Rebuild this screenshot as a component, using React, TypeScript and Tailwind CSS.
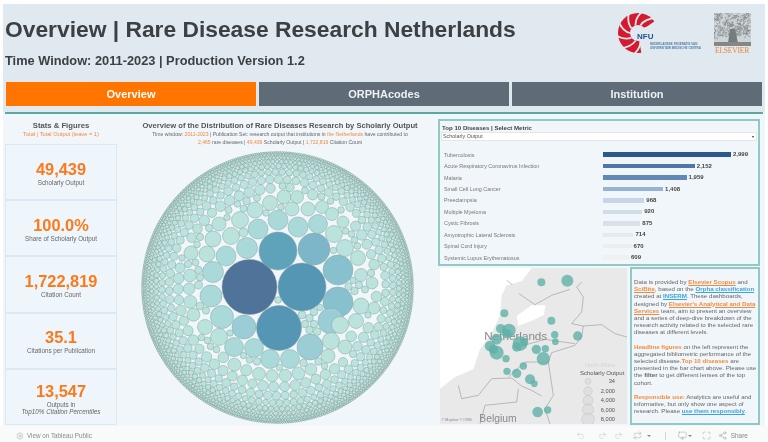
import { useMemo } from 'react';
import { Undo2, Redo2, Repeat, Monitor, Maximize, Share2, Settings } from 'lucide-react';

const stats = [
  { value: '49,439', label: 'Scholarly Output' },
  { value: '100.0%', label: 'Share of Scholarly Output' },
  { value: '1,722,819', label: 'Citation Count' },
  { value: '35.1', label: 'Citations per Publication' },
  { value: '13,547', label: 'Outputs in', sub: 'Top10% Citation Percentiles' },
];

const diseases = [
  { name: 'Tuberculosis', count: 2999, color: '#2a5a8c' },
  { name: 'Acute Respiratory Coronavirus Infection', count: 2152, color: '#4b78a8' },
  { name: 'Malaria', count: 1959, color: '#6089b5' },
  { name: 'Small Cell Lung Cancer', count: 1408, color: '#97b3d3' },
  { name: 'Preeclampsia', count: 968, color: '#c8d5e6' },
  { name: 'Multiple Myeloma', count: 920, color: '#d2dce9' },
  { name: 'Cystic Fibrosis', count: 875, color: '#d9e0ea' },
  { name: 'Amyotrophic Lateral Sclerosis', count: 714, color: '#e6eaef' },
  { name: 'Spinal Cord Injury', count: 670, color: '#ebeef1' },
  { name: 'Systemic Lupus Erythematosus', count: 609, color: '#f1f0f0' },
];

type Circle = { x: number; y: number; r: number };

// page coordinates read off the reference, largest bubbles first
const big: Circle[] = [
  { x: 249.5, y: 287, r: 27.5 }, { x: 302, y: 287, r: 24 }, { x: 279, y: 328, r: 22.5 }, { x: 278, y: 251, r: 19 },
  { x: 314, y: 249, r: 16 }, { x: 338, y: 270, r: 15 }, { x: 338, y: 302, r: 15 }, { x: 244, y: 327, r: 12 },
  { x: 310, y: 347, r: 13 }, { x: 247, y: 248, r: 10.5 }, { x: 226, y: 256, r: 10 }, { x: 258, y: 229, r: 10 },
  { x: 278, y: 220, r: 10 }, { x: 298, y: 227, r: 10 }, { x: 318, y: 224, r: 9.5 }, { x: 334, y: 234, r: 8.5 },
  { x: 345, y: 248, r: 8.5 }, { x: 358, y: 258, r: 7.5 }, { x: 240, y: 220, r: 8.5 }, { x: 255, y: 210, r: 8 },
  { x: 270, y: 203, r: 7.5 }, { x: 284, y: 197, r: 7 }, { x: 297, y: 197, r: 6.5 }, { x: 308, y: 209, r: 7 },
  { x: 292, y: 209, r: 7 }, { x: 322, y: 207, r: 6.5 }, { x: 332, y: 214, r: 6.5 }, { x: 343, y: 222, r: 6 },
  { x: 231, y: 236, r: 8.5 }, { x: 213, y: 239, r: 8 }, { x: 219, y: 224, r: 7 }, { x: 207, y: 254, r: 8 },
  { x: 191, y: 253, r: 7 }, { x: 213, y: 272, r: 10.5 }, { x: 211, y: 296, r: 11 }, { x: 222, y: 317, r: 11.5 },
  { x: 205, y: 327, r: 7.5 }, { x: 219, y: 337, r: 8.5 }, { x: 234, y: 347, r: 9.5 }, { x: 254, y: 348, r: 9.5 },
  { x: 270, y: 359, r: 9.5 }, { x: 290, y: 359, r: 9.5 }, { x: 331, y: 321, r: 13 }, { x: 331, y: 341, r: 8.5 },
  { x: 340, y: 325, r: 8.5 }, { x: 328, y: 356, r: 7 }, { x: 345, y: 347, r: 7 }, { x: 356, y: 321, r: 7.5 },
  { x: 361, y: 306, r: 8 }, { x: 374, y: 308, r: 6 }, { x: 372, y: 283, r: 6 }, { x: 361, y: 275, r: 6.5 },
];

function useCircles() {
  return useMemo(() => {
    const cx = 277.5;
    const cy = 287.5;
    const R = 136;
    const list: Circle[] = [...big];
    const sizeAt = (d: number) => Math.min(8, 0.9 + 8.5 * Math.pow(Math.max(0, (R - d) / 74), 0.9));
    const fitAt = (x: number, y: number, start: number, floor: number) => {
      let fit = start;
      for (const c of list) {
        const g = Math.hypot(c.x - x, c.y - y) - c.r;
        if (g < fit) fit = g;
        if (fit < floor) break;
      }
      return fit;
    };
    // tangent rings from the rim inwards, so the rim stays tidy
    let r = sizeAt(R - 1);
    let d = R - r;
    let ring = 0;
    while (d > 40) {
      const n = Math.floor(Math.PI / Math.asin(r / d));
      const floor = r > 3 ? r * 0.8 : r * 0.6;
      for (let i = 0; i < n; i++) {
        const a = ring * 1.7 + (i / n) * Math.PI * 2;
        const x = cx + Math.cos(a) * d;
        const y = cy + Math.sin(a) * d;
        const fit = fitAt(x, y, r, floor);
        if (fit >= floor) list.push({ x, y, r: fit });
      }
      const next = sizeAt(d - r * 1.8);
      d -= (r + next) * 0.93;
      r = next;
      ring += 1;
    }
    // plug the larger holes left between the rings
    for (let y = cy - 118; y < cy + 118; y += 1.5) {
      for (let x = cx - 118; x < cx + 118; x += 1.5) {
        if (Math.hypot(x - cx, y - cy) > 118) continue;
        const fit = fitAt(x, y, 5, 3.2);
        if (fit >= 3.2) list.push({ x, y, r: fit });
      }
    }
    return list;
  }, []);
}

function bubbleColor(r: number) {
  if (r >= 26) return '#4f7399';
  if (r >= 21) return '#5596b5';
  if (r >= 18) return '#5fa3bb';
  if (r >= 15.5) return '#7cb6c8';
  if (r >= 14) return '#88c1ce';
  if (r >= 11.8) return '#9acdd5';
  if (r >= 9) return '#a9d9d8';
  return '#b9e3dc';
}

function BubbleChart() {
  const circles = useCircles();
  return (
    <svg width="310" height="280" viewBox="125 146 310 280" className="block">
      {circles.map((c, i) => (
        <circle
          key={i}
          cx={c.x}
          cy={c.y}
          r={c.r}
          fill={bubbleColor(c.r)}
          stroke={c.r > 3 ? '#8ba3a2' : '#6f8b89'}
          strokeWidth={c.r > 3 ? 0.5 : 0.45}
        />
      ))}
    </svg>
  );
}

const mapBubbles = [
  [319, 61, 12], [397, 56, 18], [208, 154, 12], [349, 176, 12], [359, 218, 11], [361, 239, 10], [428, 222, 14],
  [197, 200, 14], [222, 205, 20], [215, 215, 14], [185, 232, 16], [165, 252, 16], [185, 272, 21], [175, 262, 14],
  [213, 290, 11], [255, 245, 22], [245, 255, 14], [268, 240, 12], [304, 262, 14], [331, 260, 11], [325, 290, 20],
  [265, 312, 11], [216, 328, 11], [245, 334, 14], [285, 352, 15], [298, 365, 10], [308, 450, 16], [338, 444, 11],
];

const legend = [
  { y: 358, r: 9, label: '34' },
  { y: 387, r: 13, label: '2,000' },
  { y: 415, r: 15, label: '4,000' },
  { y: 443, r: 17, label: '6,000' },
  { y: 472, r: 19, label: '8,000' },
];

function MapView() {
  return (
    <svg width="187" height="156" viewBox="15 18 561 468" className="block shrink-0" style={{ fontFamily: '"Liberation Sans", Arial, sans-serif' }}>
      <rect x="15" y="18" width="561" height="468" fill="#ffffff" />
      <path
        d="M290 18 L576 18 L576 486 L15 486 L15 380 L60 345 L115 322 L135 262 L170 215 L195 160 L200 100 L215 70 L260 58 Z"
        fill="#e9e9e9"
      />
      <path d="M245 162 L290 130 L332 130 L326 160 L290 176 L250 192 Z" fill="#ffffff" />
      <g fill="none" stroke="#8b8b8b" strokeWidth="1.6">
        <path d="M440 60 L425 75 L445 105 L440 150 L410 185 L445 192 L440 225 L420 250 L350 272 L340 300 L355 400 L330 440 L345 486" />
        <path d="M70 370 L80 410 L130 400 L170 350 L230 348 L260 372 L290 385 L320 402" />
        <path d="M252 95 L300 128 L350 100 L405 82" />
        <path d="M250 255 L330 232 L420 245" />
        <path d="M445 192 L500 188 L540 215 L576 225" />
        <path d="M135 486 L150 430 L245 420 L250 380" />
        <path d="M215 55 L232 68" />
        <path d="M340 300 L270 300 L220 345" />
      </g>
      <text x="148" y="233" fontSize="35" fill="#8a8a8a">Netherlands</text>
      <text x="133" y="480" fontSize="31" fill="#8a8a8a">Belgium</text>
      {mapBubbles.map(([x, y, r], i) => (
        <circle key={i} cx={x} cy={y} r={r} fill="#5fb0a8" fillOpacity="0.8" />
      ))}
      <text x="20" y="478" fontSize="11" fill="#8a8a8a">© Mapbox © OSM</text>
      <text x="450" y="314" fontSize="17" fill="#d4d4d4">North Rhine</text>
      <text x="435" y="338" fontSize="18" fill="#555555">Scholarly Output</text>
      {legend.map(l => (
        <g key={l.y}>
          <circle cx="459" cy={l.y} r={l.r} fill="#d8d8d8" fillOpacity="0.6" stroke="#b4b4b4" />
          <text x="540" y={l.y + 6} fontSize="17" fill="#555555" textAnchor="end">{l.label}</text>
        </g>
      ))}
    </svg>
  );
}

function NfuLogo() {
  const blades = Array.from({ length: 10 }, (_, i) => i * 36);
  return (
    <svg width="40" height="40" viewBox="-20 -20 40 40" className="block">
      <circle r="20" fill="#d5192e" />
      {blades.map(a => (
        <path key={a} d="M8 0 Q 16 2 20 13" fill="none" stroke="#dfe9ef" strokeWidth="1.8" transform={`rotate(${a})`} />
      ))}
      <circle r="8" fill="#dfe9ef" />
      {/* lower right is open for the NFU letters */}
      <path d="M0 0 L24 -17 L30 30 L5 30 Z" fill="#dfe9ef" />
    </svg>
  );
}

function ElsevierTree() {
  const lines = useMemo(() => {
    let s = 7;
    const rnd = () => {
      s = (s * 16807) % 2147483647;
      return s / 2147483647;
    };
    return Array.from({ length: 300 }, () => {
      const x = rnd() * 36;
      const y = rnd() * 24;
      const a = rnd() * Math.PI * 2;
      return { x, y, x2: x + Math.cos(a) * 2.4, y2: y + Math.sin(a) * 2.4 };
    });
  }, []);
  return (
    <svg width="37" height="33" viewBox="0 0 37 33" className="block">
      <rect width="37" height="33" fill="#ccd4d7" />
      {lines.map((l, i) => (
        <line key={i} x1={l.x} y1={l.y} x2={l.x2} y2={l.y2} stroke="#858b8c" strokeWidth="0.7" />
      ))}
      <path d="M14 30 L16 16 L21 16 L24 30 Z" fill="#767b7b" />
      <path d="M0 29 L37 29 L37 33 L0 33 Z" fill="#82888a" />
    </svg>
  );
}

export default function App() {
  return (
    <div className="w-[768px] h-[442px] overflow-hidden bg-white flex flex-col text-[#555] blur-[0.35px]" style={{ fontFamily: '"Liberation Sans", Arial, sans-serif' }}>
      <div className="h-[4px] shrink-0" />
      <div className="mx-[3px] h-[422px] shrink-0 bg-[#f0f6fa] flex flex-col">
        {/* Header */}
        <div className="h-[108px] shrink-0 bg-[#dfe9ef] flex flex-col">
          <div className="h-[78px] shrink-0 pl-[2px] pr-[14px] flex justify-between">
            <div>
              <h1 className="text-[22.8px] font-bold leading-none mt-[14px] text-[#3c4043]">Overview | Rare Disease Research Netherlands</h1>
              <p className="text-[12.8px] font-bold leading-none mt-[14px] text-[#3c4043]">Time Window: 2011-2023 | Production Version 1.2</p>
            </div>
            <div className="flex items-start gap-[6px] pt-[9px]">
              <div className="relative w-[89px] h-[42px]">
                <NfuLogo />
                <span className="absolute left-[19px] top-[20px] text-[8px] font-bold text-[#23548e] leading-none">NFU</span>
                <span className="absolute left-[32px] top-[30px] text-[3px] leading-[3.6px] font-bold whitespace-nowrap text-[#5a7fa5]">
                  NEDERLANDSE FEDERATIE VAN<br />UNIVERSITAIR MEDISCHE CENTRA
                </span>
              </div>
              <div className="flex flex-col items-center w-[38px]">
                <ElsevierTree />
                <span className="text-[7.5px] leading-[10px] text-[#f0833a] tracking-tight" style={{ fontFamily: '"Liberation Serif", serif' }}>ELSEVIER</span>
              </div>
            </div>
          </div>
          <div className="flex gap-[3px] px-[3px] h-[24px] shrink-0">
            <div className="flex-1 bg-[#ff7500] text-white text-[11px] font-bold flex items-center justify-center">Overview</div>
            <div className="flex-1 bg-[#5f6b76] text-[#eef1f3] text-[11px] font-bold flex items-center justify-center">ORPHAcodes</div>
            <div className="flex-1 bg-[#5f6b76] text-[#eef1f3] text-[11px] font-bold flex items-center justify-center">Institution</div>
          </div>
        </div>
        <div className="h-[2px] shrink-0 mx-[2px] bg-[#5aa89f]" />

        <div className="flex flex-1 min-h-0">
          {/* Stats */}
          <div className="w-[112px] ml-[2px] shrink-0 flex flex-col">
            <div className="h-[30px] shrink-0 flex flex-col items-center pt-[7px]">
              <span className="text-[7.7px] font-bold leading-[9px] text-[#555]">Stats &amp; Figures</span>
              <span className="text-[5.7px] leading-[8px] text-[#f58a3c]">Total | Total Output (leave = 1)</span>
            </div>
            {stats.map(s => (
              <div key={s.value} className={s.sub ? 'h-[56.2px] shrink-0 border border-[#dce9f2] bg-[#eff6fb] flex flex-col items-center pt-[11px]' : 'h-[56.2px] shrink-0 border border-[#dce9f2] bg-[#eff6fb] flex flex-col items-center pt-[13.5px]'}>
                <span className="text-[16.4px] font-bold leading-[20px] text-[#fb7a1c]">{s.value}</span>
                <span className="text-[6.3px] leading-[7.5px] text-[#666]">{s.label}</span>
                {s.sub && <span className="text-[6.3px] leading-[7.5px] italic text-[#666]">{s.sub}</span>}
              </div>
            ))}
          </div>

          {/* Bubble chart */}
          <div className="w-[310px] ml-[8px] shrink-0 flex flex-col items-center">
            <div className="h-[32px] shrink-0 flex flex-col items-center pt-[7px]">
              <span className="text-[7.6px] font-bold leading-[9px] text-[#555] whitespace-nowrap">Overview of the Distribution of Rare Diseases Research by Scholarly Output</span>
              <span className="text-[5.1px] leading-[8px] text-[#666] whitespace-nowrap">
                Time window: <span className="text-[#f58a3c]">2011-2023</span> | Publication Set: research output that institutions in <span className="text-[#f58a3c]">the Netherlands</span> have contributed to
              </span>
              <span className="text-[5.1px] leading-[8px] text-[#666] whitespace-nowrap">
                <span className="text-[#f58a3c]">2,465</span> rare diseases | <span className="text-[#f58a3c]">49,439</span> Scholarly Output | <span className="text-[#f58a3c]">1,722,819</span> Citation Count
              </span>
            </div>
            <BubbleChart />
          </div>

          {/* Right side */}
          <div className="w-[322px] ml-[3px] shrink-0 flex flex-col pt-[5px] gap-[1px]">
            <div className="h-[147px] shrink-0 border-2 border-[#8fcbc4] px-[1px] pt-[2px]">
              <div className="text-[6.1px] font-bold leading-[9px] text-[#444] pl-[1px]">Top 10 Diseases | Select Metric</div>
              <div className="h-[9px] bg-white border border-[#e2e6e8] flex items-center justify-between pl-[1px] pr-[2px] text-[5.4px] text-[#555]">
                <span>Scholarly Output</span>
                <span className="w-0 h-0 border-x-[1.5px] border-x-transparent border-t-[2px] border-t-[#333]" />
              </div>
              <div className="mt-[8px] flex flex-col">
                {diseases.map(d => (
                  <div key={d.name} className="h-[11.45px] flex items-center">
                    <span className="w-[162px] shrink-0 pl-[3px] text-[5.4px] text-[#777] whitespace-nowrap">{d.name}</span>
                    <div className="h-[4.5px]" style={{ width: (d.count / 2999) * 128, backgroundColor: d.color }} />
                    <span className="ml-[2px] text-[6px] font-bold text-[#444]">{d.count.toLocaleString('en-US')}</span>
                  </div>
                ))}
              </div>
            </div>
            <div className="flex min-h-0">
              <div className="ml-[2px] mt-[1px]">
                <MapView />
              </div>
              <div className="w-[130px] ml-[3px] shrink-0 border-2 border-[#8fcbc4] pl-[2px] pr-[1px] pt-[9px] text-[6.15px] leading-[7.2px] text-[#666] h-[158px] flex flex-col gap-[7px]">
                <p>
                  Data is provided by <b className="text-[#f58a3c] underline">Elsevier Scopus</b> and <b className="text-[#f58a3c] underline">SciBite</b>, based on the <b className="text-[#3aa3e0] underline">Orpha classification</b> created at <b className="text-[#3aa3e0] underline">INSERM</b>. These dashboards, designed by <b className="text-[#f58a3c] underline">Elsevier's Analytical and Data Services</b> team, aim to present an overview and a series of deep-dive breakdown of the research activity related to the selected rare diseases at different levels.
                </p>
                <p>
                  <b className="text-[#f58a3c]">Headline figures</b> on the left represent the aggregated bibliometric performance of the selected disease.<b className="text-[#f58a3c]">Top 10 diseases</b> are presented in the bar chart above. Please use the <b>filter</b> to get different lenses of the top cohort.
                </p>
                <p>
                  <b className="text-[#f58a3c]">Responsible use:</b> Analytics are useful and informative, but only show one aspect of research. Please <b className="text-[#3aa3e0] underline">use them responsibly</b>.
                </p>
              </div>
            </div>
          </div>
        </div>
      </div>

      {/* Tableau toolbar */}
      <div className="flex-1 bg-[#fafafa] flex items-center justify-between pl-[16px] pr-[20px] pt-[3px] text-[#8a8a8a]">
        <div className="flex items-center gap-[3px] text-[6.3px]">
          <Settings size={8} strokeWidth={1} />
          <span>View on Tableau Public</span>
        </div>
        <div className="flex items-center text-[#b4b4b4]">
          <Undo2 size={9} strokeWidth={1} />
          <Redo2 size={9} strokeWidth={1} className="ml-[13px]" />
          <Redo2 size={9} strokeWidth={1} className="ml-[7px]" />
          <Repeat size={9} strokeWidth={1} className="ml-[10px] text-[#888]" />
          <span className="ml-[5px] w-0 h-0 border-x-[2px] border-x-transparent border-t-[2.5px] border-t-[#888]" />
          <span className="w-px h-[8px] bg-[#d5d5d5] ml-[14px]" />
          <Monitor size={9} strokeWidth={1} className="ml-[12px] text-[#888]" />
          <span className="ml-[1px] w-0 h-0 border-x-[2px] border-x-transparent border-t-[2.5px] border-t-[#888]" />
          <Maximize size={9} strokeWidth={1} className="ml-[10px] text-[#888]" />
          <Share2 size={9} strokeWidth={1} className="ml-[7px] text-[#888]" />
          <span className="ml-[4px] text-[6.5px] text-[#888]">Share</span>
        </div>
      </div>
    </div>
  );
}
